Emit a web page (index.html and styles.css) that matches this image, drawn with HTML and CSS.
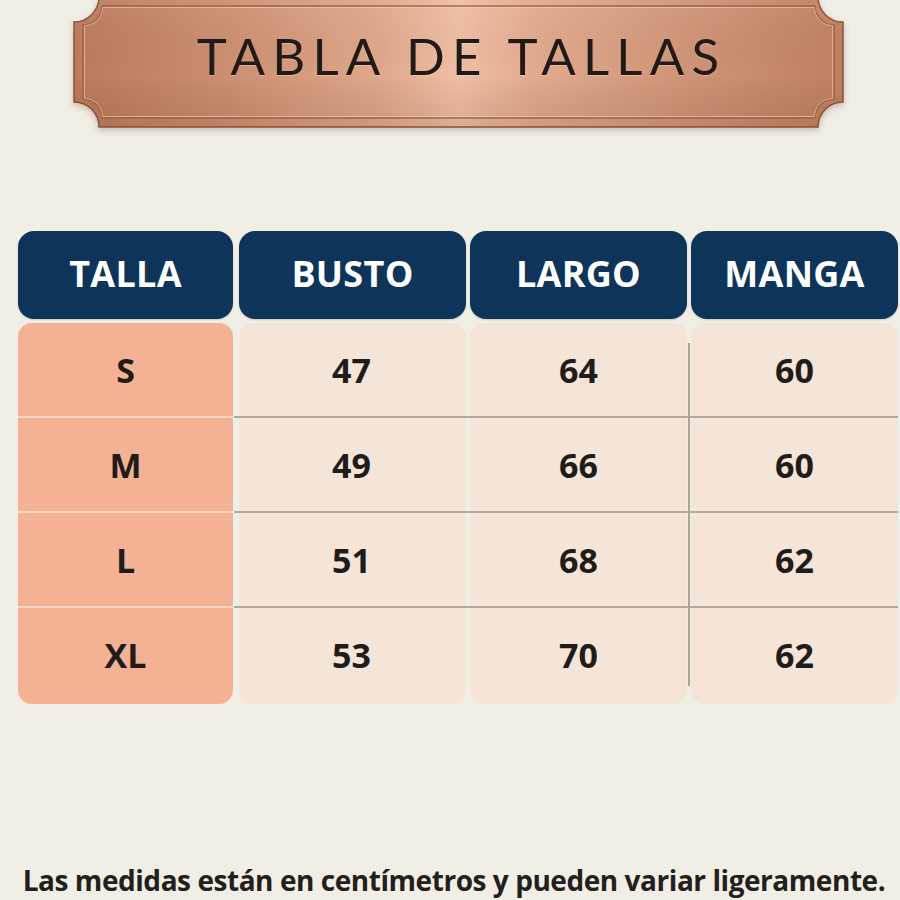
FILE: index.html
```html
<!DOCTYPE html>
<html lang="es">
<head>
<meta charset="utf-8">
<title>Tabla de tallas</title>
<link rel="stylesheet" href="styles.css">
</head>
<body>
<div class="page">
  <header class="plaque">
    <svg class="plaque-art" viewBox="0 0 769 130" width="769" height="130" aria-hidden="true">
      <defs>
        <linearGradient id="copper" x1="0" y1="0" x2="1" y2="0">
          <stop offset="0" stop-color="#bb7a5d"/>
          <stop offset="0.2" stop-color="#cc8f71"/>
          <stop offset="0.4" stop-color="#e0a88c"/>
          <stop offset="0.5" stop-color="#efbfa5"/>
          <stop offset="0.6" stop-color="#e2aa8e"/>
          <stop offset="0.8" stop-color="#cf9477"/>
          <stop offset="1" stop-color="#bf8062"/>
        </linearGradient>
        <linearGradient id="shade" x1="0" y1="0" x2="0" y2="1">
          <stop offset="0" stop-color="#ffffff" stop-opacity="0.06"/>
          <stop offset="0.6" stop-color="#000000" stop-opacity="0"/>
          <stop offset="1" stop-color="#5a2a15" stop-opacity="0.12"/>
        </linearGradient>
        <filter id="drop" x="-5%" y="-10%" width="110%" height="130%">
          <feDropShadow dx="0" dy="3" stdDeviation="3" flood-color="#6b4a3a" flood-opacity="0.3"/>
        </filter>
      </defs>
      <path filter="url(#drop)" d="M25,0 H744 A25 25 0 0 0 769,25 V105 A25 25 0 0 0 744,130 H25 A25 25 0 0 0 0,105 V25 A25 25 0 0 0 25,0 Z" fill="url(#copper)" stroke="#8f5339" stroke-width="1.5"/>
      <path d="M25,0 H744 A25 25 0 0 0 769,25 V105 A25 25 0 0 0 744,130 H25 A25 25 0 0 0 0,105 V25 A25 25 0 0 0 25,0 Z" fill="url(#shade)"/>
      <path d="M28,9 H741 A19 19 0 0 0 760,28 V102 A19 19 0 0 0 741,121 H28 A19 19 0 0 0 9,102 V28 A19 19 0 0 0 28,9 Z" fill="none" stroke="#985a3f" stroke-width="1.3" opacity="0.85"/>
      <path d="M28.5,10.5 H740.5 A18 18 0 0 0 758.5,28.5 V101.5 A18 18 0 0 0 740.5,119.5 H28.5 A18 18 0 0 0 10.5,101.5 V28.5 A18 18 0 0 0 28.5,10.5 Z" fill="none" stroke="#f5cbb3" stroke-width="0.9" opacity="0.7"/>
    </svg>
    <h1 class="plaque-title">TABLA DE TALLAS</h1>
  </header>

  <section class="chart">
    <div class="head-row">
      <div class="head">TALLA</div>
      <div class="head">BUSTO</div>
      <div class="head">LARGO</div>
      <div class="head">MANGA</div>
    </div>

    <div class="body-grid">
      <div class="bg bg-size c1"></div>
      <div class="bg c2"></div>
      <div class="bg c3"></div>
      <div class="bg c4"></div>

      <div class="sep r1"></div>
      <div class="sep r2"></div>
      <div class="sep r3"></div>

      <div class="hline r1"></div>
      <div class="hline r2"></div>
      <div class="hline r3"></div>

      <div class="vline"></div>

      <div class="cell c1 r1">S</div>
      <div class="cell c2 r1">47</div>
      <div class="cell c3 r1">64</div>
      <div class="cell c4 r1">60</div>

      <div class="cell c1 r2">M</div>
      <div class="cell c2 r2">49</div>
      <div class="cell c3 r2">66</div>
      <div class="cell c4 r2">60</div>

      <div class="cell c1 r3">L</div>
      <div class="cell c2 r3">51</div>
      <div class="cell c3 r3">68</div>
      <div class="cell c4 r3">62</div>

      <div class="cell c1 r4">XL</div>
      <div class="cell c2 r4">53</div>
      <div class="cell c3 r4">70</div>
      <div class="cell c4 r4">62</div>
    </div>
  </section>

  <p class="note">Las medidas están en centímetros y pueden variar ligeramente.</p>
</div>
</body>
</html>
```

FILE: styles.css
```css
* { box-sizing: border-box; }

html, body {
  margin: 0;
  padding: 0;
  background: #f1eee6;
}

.page {
  width: 900px;
  height: 900px;
  overflow: hidden;
  display: flex;
  flex-direction: column;
  font-family: "Open Sans", "Liberation Sans", sans-serif;
}

/* Plaque */
.plaque {
  display: grid;
  width: 769px;
  height: 130px;
  margin: -3px 0 0 74px;
}

.plaque-art,
.plaque-title {
  grid-area: 1 / 1;
}

.plaque-art {
  display: block;
  overflow: visible;
}

.plaque-title {
  margin: 0;
  height: 116px;
  display: flex;
  align-items: center;
  justify-content: center;
  padding: 0 0 0 6px;
  font-family: "Lato", "Liberation Sans", sans-serif;
  font-weight: 400;
  font-size: 51px;
  letter-spacing: 7.2px;
  color: #221a17;
  text-shadow: 0 1px 0 rgba(255, 220, 200, 0.4);
}

/* Chart */
.chart {
  margin: 104px 0 0 18px;
  width: 880px;
}

.head-row {
  display: grid;
  grid-template-columns: 215px 229px 217px 207px;
  column-gap: 4px;
  height: 88px;
}

.head {
  background: #0e345a;
  border-radius: 16px;
  display: flex;
  align-items: center;
  justify-content: center;
  color: #ffffff;
  font-weight: 700;
  font-size: 36px;
  letter-spacing: 0.3px;
  padding-bottom: 4px;
  box-shadow: 0 1px 2px rgba(0, 0, 0, 0.15);
}

.head:nth-child(2) { margin-left: 2px; }

.body-grid {
  margin-top: 4px;
  display: grid;
  grid-template-columns: 215px 229px 217px 207px;
  grid-template-rows: 95px 95px 95px 96px;
  column-gap: 4px;
}

.bg {
  border-radius: 14px;
  background: #f5e5d9;
}

.bg-size {
  background: #f5b194;
}

.c1 { grid-column: 1; }
.c2 { grid-column: 2; }
.c3 { grid-column: 3; }
.c4 { grid-column: 4; }

.r1 { grid-row: 1; }
.r2 { grid-row: 2; }
.r3 { grid-row: 3; }
.r4 { grid-row: 4; }

.bg.c1, .bg.c2, .bg.c3, .bg.c4 { grid-row: 1 / 5; }

.bg.c2 { margin-left: 2px; }

.sep {
  grid-column: 1;
  align-self: end;
  height: 2px;
  background: #fbd6c4;
}

.hline {
  grid-column: 2 / 5;
  align-self: end;
  height: 2px;
  margin-left: -3px;
  background: #b1aaa3;
}

.vline {
  grid-column: 4;
  grid-row: 1 / 5;
  justify-self: start;
  width: 2px;
  margin: 20px 0 18px -3px;
  background: #aaa39c;
}

.cell {
  display: flex;
  align-items: center;
  justify-content: center;
  font-weight: 700;
  font-size: 34px;
  color: #201c1a;
  padding-bottom: 2px;
}

.note {
  margin: 160px 0 0 0;
  text-align: center;
  padding-left: 8px;
  font-weight: 700;
  font-size: 28px;
  letter-spacing: -0.45px;
  color: #221f1d;
  line-height: 32px;
  white-space: nowrap;
}
```
